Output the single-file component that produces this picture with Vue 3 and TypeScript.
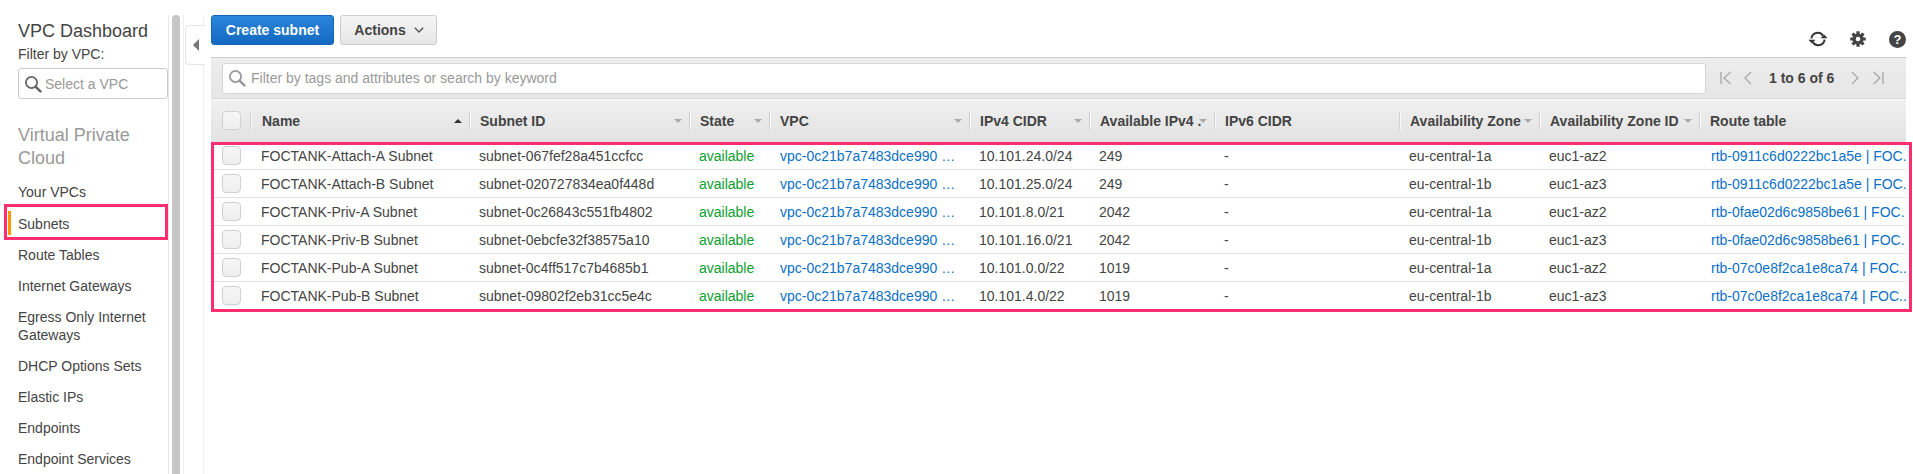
<script setup lang="ts">
interface Subnet { name: string; id: string; cidr: string; ips: string; az: string; azId: string; rtb: string }
interface Column { label: string; width: number; caret: '' | 'up' | 'down' }

const columns: Column[] = [
  { label: 'Name', width: 219, caret: 'up' },
  { label: 'Subnet ID', width: 220, caret: 'down' },
  { label: 'State', width: 80, caret: 'down' },
  { label: 'VPC', width: 200, caret: 'down' },
  { label: 'IPv4 CIDR', width: 120, caret: 'down' },
  { label: 'Available IPv4 .', width: 125, caret: 'down' },
  { label: 'IPv6 CIDR', width: 185, caret: '' },
  { label: 'Availability Zone', width: 140, caret: 'down' },
  { label: 'Availability Zone ID', width: 160, caret: 'down' },
  { label: 'Route table', width: 207, caret: '' },
]

const subnets: Subnet[] = [
  { name: 'FOCTANK-Attach-A Subnet', id: 'subnet-067fef28a451ccfcc', cidr: '10.101.24.0/24', ips: '249', az: 'eu-central-1a', azId: 'euc1-az2', rtb: 'rtb-0911c6d0222bc1a5e | FOC.' },
  { name: 'FOCTANK-Attach-B Subnet', id: 'subnet-020727834ea0f448d', cidr: '10.101.25.0/24', ips: '249', az: 'eu-central-1b', azId: 'euc1-az3', rtb: 'rtb-0911c6d0222bc1a5e | FOC.' },
  { name: 'FOCTANK-Priv-A Subnet', id: 'subnet-0c26843c551fb4802', cidr: '10.101.8.0/21', ips: '2042', az: 'eu-central-1a', azId: 'euc1-az2', rtb: 'rtb-0fae02d6c9858be61 | FOC.' },
  { name: 'FOCTANK-Priv-B Subnet', id: 'subnet-0ebcfe32f38575a10', cidr: '10.101.16.0/21', ips: '2042', az: 'eu-central-1b', azId: 'euc1-az3', rtb: 'rtb-0fae02d6c9858be61 | FOC.' },
  { name: 'FOCTANK-Pub-A Subnet', id: 'subnet-0c4ff517c7b4685b1', cidr: '10.101.0.0/22', ips: '1019', az: 'eu-central-1a', azId: 'euc1-az2', rtb: 'rtb-07c0e8f2ca1e8ca74 | FOC..' },
  { name: 'FOCTANK-Pub-B Subnet', id: 'subnet-09802f2eb31cc5e4c', cidr: '10.101.4.0/22', ips: '1019', az: 'eu-central-1b', azId: 'euc1-az3', rtb: 'rtb-07c0e8f2ca1e8ca74 | FOC..' },
]

const gridColumns = '39px ' + columns.map((c) => c.width + 'px').join(' ')

const navTop = ['Your VPCs']
const navRest = ['Route Tables', 'Internet Gateways', 'Egress Only Internet Gateways', 'DHCP Options Sets', 'Elastic IPs', 'Endpoints', 'Endpoint Services']
const teeth = [0, 45, 90, 135]
</script>

<template>
  <div class="page">
    <aside class="side">
      <h1 class="dash">VPC Dashboard</h1>
      <label class="filter-label">Filter by VPC:</label>
      <div class="vpc-select">
        <svg width="18" height="18" viewBox="0 0 18 18"><circle cx="7.5" cy="7.5" r="5.6" fill="none" stroke="#666" stroke-width="1.8" /><path d="M11.8 11.8 16.4 16.4" stroke="#666" stroke-width="2.6" stroke-linecap="round" /></svg>
        <span>Select a VPC</span>
      </div>
      <h2 class="group">Virtual Private Cloud</h2>
      <nav class="nav">
        <a v-for="n in navTop" :key="n" class="nav-item">{{ n }}</a>
        <a class="nav-item active">Subnets</a>
        <a v-for="n in navRest" :key="n" class="nav-item">{{ n }}</a>
      </nav>
    </aside>
    <div class="scrollbar"></div>
    <div class="rail">
      <div class="rail-line"></div>
      <button class="collapse" type="button" aria-label="Collapse"><i></i></button>
    </div>
    <main class="main">
      <div class="toolbar">
        <button class="btn primary" type="button">Create subnet</button>
        <button class="btn actions" type="button">
          Actions
          <svg width="10" height="6" viewBox="0 0 10 6"><path d="M.8.8 5 5 9.2.8" fill="none" stroke="#555" stroke-width="1.4" /></svg>
        </button>
        <div class="tools">
          <svg width="20" height="18" viewBox="0 0 20 18"><path d="M3.4 8.4A6.4 6.4 0 0 1 15 5.6" fill="none" stroke="#333" stroke-width="2" /><path d="M16.6 9.6A6.4 6.4 0 0 1 5 12.4" fill="none" stroke="#333" stroke-width="2" /><path d="M12.6 8.2h7L16.1 4.4zM.4 9.8h7L3.9 13.6z" fill="#333" /></svg>
          <svg class="gear" width="16" height="16" viewBox="0 0 16 16">
            <rect v-for="t in teeth" :key="t" x="6.4" y="0.2" width="3.2" height="15.6" rx=".5" fill="#444" :transform="`rotate(${t} 8 8)`" />
            <circle cx="8" cy="8" r="5.6" fill="#444" /><circle cx="8" cy="8" r="2.3" fill="#fff" />
          </svg>
          <span class="help">?</span>
        </div>
      </div>
      <section class="panel">
        <div class="searchbar">
          <div class="search">
            <svg width="18" height="18" viewBox="0 0 18 18"><circle cx="7.5" cy="7.5" r="5.6" fill="none" stroke="#999" stroke-width="1.8" /><path d="M11.8 11.8 16.4 16.4" stroke="#999" stroke-width="2.6" stroke-linecap="round" /></svg>
            <span>Filter by tags and attributes or search by keyword</span>
          </div>
          <div class="pager">
            <svg width="12" height="14" viewBox="0 0 12 14"><path d="M1 1v12M10.5 1 4 7l6.5 6" fill="none" stroke="#aaa" stroke-width="1.4" /></svg>
            <svg width="8" height="14" viewBox="0 0 8 14"><path d="M7 1 1 7l6 6" fill="none" stroke="#aaa" stroke-width="1.4" /></svg>
            <b>1 to 6 of 6</b>
            <svg width="8" height="14" viewBox="0 0 8 14"><path d="m1 1 6 6-6 6" fill="none" stroke="#aaa" stroke-width="1.4" /></svg>
            <svg width="12" height="14" viewBox="0 0 12 14"><path d="M11 1v12M1.5 1 8 7l-6.5 6" fill="none" stroke="#aaa" stroke-width="1.4" /></svg>
          </div>
        </div>
        <div class="thead" :style="{ gridTemplateColumns: gridColumns }">
          <div class="check-cell"><span class="check"></span></div>
          <div v-for="c in columns" :key="c.label" class="th">
            <span class="th-sep"></span>
            <span class="th-label">{{ c.label }}</span>
            <i v-if="c.caret" :class="['caret', c.caret]"></i>
          </div>
        </div>
        <div class="tbody">
          <div v-for="s in subnets" :key="s.id" class="tr" :style="{ gridTemplateColumns: gridColumns }">
            <div class="check-cell"><span class="check"></span></div>
            <div class="td">{{ s.name }}</div>
            <div class="td">{{ s.id }}</div>
            <div class="td ok">available</div>
            <div class="td link vpc">vpc-0c21b7a7483dce990 …</div>
            <div class="td">{{ s.cidr }}</div>
            <div class="td">{{ s.ips }}</div>
            <div class="td">-</div>
            <div class="td">{{ s.az }}</div>
            <div class="td">{{ s.azId }}</div>
            <div class="td link rtb">{{ s.rtb }}</div>
          </div>
          <div class="highlight"></div>
        </div>
      </section>
    </main>
  </div>
</template>

<style>
html, body { margin: 0; background: #fff; overflow: hidden; }
</style>

<style scoped>
.page {
  display: flex;
  width: 1913px;
  height: 474px;
  overflow: hidden;
  background: #fff;
  color: #444;
  font: 14px/18px "Liberation Sans", Arial, sans-serif;
}
.side {
  box-sizing: border-box;
  flex: none;
  width: 169px;
  margin-top: 15px;
  padding: 5px 0 0 18px;
  border-right: 1px solid #e8e8e8;
}
.dash { margin: 0; font-size: 18px; line-height: 22px; font-weight: 400; color: #444; }
.filter-label { display: block; margin-top: 3px; line-height: 18px; }
.vpc-select {
  box-sizing: border-box;
  display: flex;
  align-items: center;
  gap: 3px;
  width: 150px;
  height: 31px;
  margin-top: 5px;
  padding-left: 5px;
  border: 1px solid #ccc;
  border-radius: 3px;
  color: #999;
}
.group { margin: 25px 0 0; font-size: 18px; line-height: 23px; font-weight: 400; color: #999; }
.nav { display: flex; flex-direction: column; gap: 13px; margin-top: 13px; }
.nav-item { position: relative; display: block; width: 132px; color: #444; }
.nav-item.active { margin-top: 1px; }
.nav-item.active::before {
  content: "";
  position: absolute;
  left: -10px;
  top: -4px;
  width: 3px;
  height: 24px;
  background: #f90;
}
.nav-item.active::after {
  content: "";
  position: absolute;
  left: -14px;
  top: -11px;
  width: 164px;
  height: 36px;
  box-sizing: border-box;
  border: 3px solid #fb2f6f;
}
.scrollbar {
  flex: none;
  width: 8px;
  margin: 15px 0 0 3px;
  background: #c6c6c6;
  border-radius: 4px 4px 0 0;
}
.rail {
  position: relative;
  box-sizing: border-box;
  flex: none;
  width: 28px;
  margin: 15px 0 0 3px;
  border-left: 1px solid #eee;
}
.rail-line { height: 100%; margin-left: 19px; border-left: 1px solid #eee; }
.collapse {
  position: absolute;
  left: 1px;
  top: 10px;
  box-sizing: border-box;
  width: 20px;
  height: 40px;
  padding: 0;
  background: #fff;
  border: 1px solid #e6e6e6;
  border-right: 0;
  border-radius: 4px 0 0 4px;
}
.collapse i {
  display: block;
  width: 0;
  height: 0;
  margin-left: 7px;
  border-style: solid;
  border-width: 6px 6px 6px 0;
  border-color: transparent #777 transparent transparent;
}
.main { flex: none; width: 1695px; }
.toolbar { display: flex; align-items: flex-start; padding-top: 15px; height: 57px; box-sizing: border-box; }
.btn {
  box-sizing: border-box;
  height: 30px;
  border-radius: 3px;
  font: bold 14px/18px "Liberation Sans", Arial, sans-serif;
  padding: 0;
}
.primary {
  width: 123px;
  color: #fff;
  background: linear-gradient(#2b85da, #1369c1);
  border: 1px solid #1166bb;
}
.actions {
  display: flex;
  align-items: center;
  justify-content: center;
  gap: 8px;
  width: 97px;
  margin-left: 6px;
  padding-left: 1px;
  color: #444;
  background: linear-gradient(#f5f5f5, #e6e6e6);
  border: 1px solid #ccc;
}
.tools {
  display: flex;
  align-items: center;
  gap: 22px;
  margin: 15px 0 0 auto;
  height: 18px;
}
.gear { margin-right: 1px; }
.help {
  width: 17px;
  height: 17px;
  border-radius: 50%;
  background: #444;
  color: #fff;
  font: bold 13px/17px "Liberation Sans", Arial, sans-serif;
  text-align: center;
}
.searchbar {
  box-sizing: border-box;
  display: flex;
  align-items: center;
  height: 42px;
  padding: 4px 0 4px 11px;
  background: linear-gradient(#ededed, #e6e6e6);
  border-top: 1px solid #ccc;
  border-bottom: 1px solid #d6d6d6;
}
.search {
  box-sizing: border-box;
  display: flex;
  align-items: center;
  gap: 5px;
  width: 1484px;
  height: 31px;
  padding-left: 5px;
  background: #fff;
  border: 1px solid #d5d5d5;
  border-radius: 3px;
  color: #999;
}
.pager {
  display: flex;
  align-items: center;
  margin-left: 14px;
  color: #444;
}
.pager svg:nth-child(2) { margin-left: 12px; }
.pager b { margin: 0 17px; white-space: nowrap; }
.pager svg:nth-child(5) { margin-left: 13px; }
.thead {
  display: grid;
  height: 43px;
  padding-bottom: 1px;
  background: linear-gradient(#f0f0f0, #e2e2e2);
  align-items: center;
  border-top: 1px solid #fafafa;
  box-sizing: border-box;
}
.th { position: relative; display: flex; align-items: center; padding: 0 11px; font-weight: bold; color: #444; white-space: nowrap; }
.th:nth-child(2) { padding-left: 12px; }
.th-sep { position: absolute; left: 0; top: 0; height: 18px; width: 1px; background: #d2d2d2; box-shadow: 1px 0 0 #f8f8f8; }
.caret {
  position: absolute;
  right: 7px;
  width: 0;
  height: 0;
  border-style: solid;
  border-color: transparent;
}
.caret.down { border-width: 4px 4px 0; border-top-color: #aaa; }
.caret.up { border-width: 0 4px 4px; border-bottom-color: #333; }
.check-cell { display: flex; padding-left: 11px; }
.check {
  box-sizing: border-box;
  width: 19px;
  height: 19px;
  background: linear-gradient(#f6f6f6, #eeeeee);
  border: 1px solid #d0d0d0;
  border-radius: 4px;
}
.tbody { position: relative; }
.tr {
  box-sizing: border-box;
  display: grid;
  height: 28px;
  align-items: center;
  border-bottom: 1px solid #e1e1e1;
}
.tr:last-of-type { border-bottom: 0; }
.td { padding: 1px 0 0 10px; white-space: nowrap; overflow: hidden; color: #444; }
.td:nth-child(2) { padding-left: 11px; }
.ok { color: #0a9e2e; }
.link { color: #0b6fc7; }
.vpc { padding-left: 11px; }
.rtb { padding-left: 12px; }
.highlight {
  position: absolute;
  left: 0;
  top: 0;
  width: 1701px;
  height: 170px;
  box-sizing: border-box;
  border: 3px solid #fb2f6f;
  pointer-events: none;
}
</style>
